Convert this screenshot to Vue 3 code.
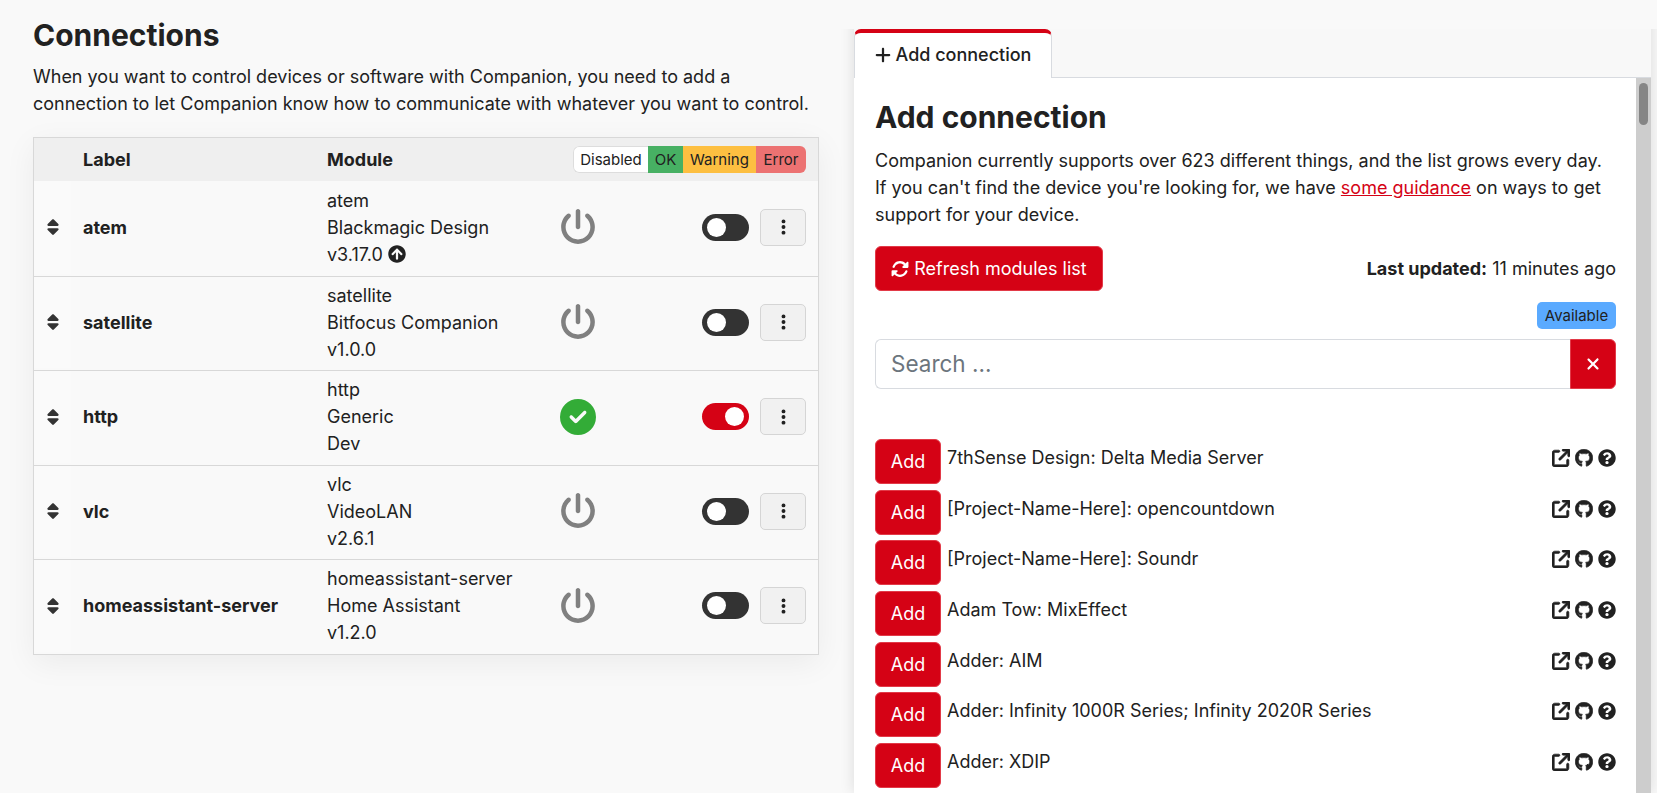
<script setup>
const connections = [
  { label: 'atem', id: 'atem', vendor: 'Blackmagic Design', version: 'v3.17.0', update: true, on: false },
  { label: 'satellite', id: 'satellite', vendor: 'Bitfocus Companion', version: 'v1.0.0', on: false },
  { label: 'http', id: 'http', vendor: 'Generic', version: 'Dev', on: true },
  { label: 'vlc', id: 'vlc', vendor: 'VideoLAN', version: 'v2.6.1', on: false },
  { label: 'homeassistant-server', id: 'homeassistant-server', vendor: 'Home Assistant', version: 'v1.2.0', on: false },
]

const modules = [
  '7thSense Design: Delta Media Server',
  '[Project-Name-Here]: opencountdown',
  '[Project-Name-Here]: Soundr',
  'Adam Tow: MixEffect',
  'Adder: AIM',
  'Adder: Infinity 1000R Series; Infinity 2020R Series',
  'Adder: XDIP',
]

const icons = {
  sort: 'M137.4 41.4c12.5-12.5 32.8-12.5 45.3 0l128 128c9.2 9.2 11.9 22.9 6.9 34.9s-16.6 19.8-29.6 19.8H32c-12.9 0-24.6-7.8-29.6-19.8s-2.2-25.7 6.9-34.9l128-128zm0 429.3l-128-128c-9.2-9.2-11.9-22.9-6.9-34.9s16.6-19.8 29.6-19.8H288c12.9 0 24.6 7.8 29.6 19.8s2.2 25.7-6.9 34.9l-128 128c-12.5 12.5-32.8 12.5-45.3 0z',
  power: 'M288 32c0-17.7-14.3-32-32-32s-32 14.3-32 32V256c0 17.7 14.3 32 32 32s32-14.3 32-32V32zM143.5 120.6c13.6-11.3 15.4-31.5 4.1-45.1s-31.5-15.4-45.1-4.1C49.7 115.4 16 181.8 16 256c0 132.5 107.5 240 240 240s240-107.5 240-240c0-74.2-33.8-140.6-86.6-184.6c-13.6-11.3-33.8-9.4-45.1 4.1s-9.4 33.8 4.1 45.1c38.9 32.3 63.5 81 63.5 135.4c0 97.2-78.8 176-176 176s-176-78.8-176-176c0-54.4 24.7-103.1 63.5-135.4z',
  check: 'M256 512A256 256 0 1 0 256 0a256 256 0 1 0 0 512zM369 209L241 337c-9.4 9.4-24.6 9.4-33.9 0l-64-64c-9.4-9.4-9.4-24.6 0-33.9s24.6-9.4 33.9 0l47 47L335 175c9.4-9.4 24.6-9.4 33.9 0s9.4 24.6 0 33.9z',
  dots: 'M64 360a56 56 0 1 0 0 112 56 56 0 1 0 0-112zm0-160a56 56 0 1 0 0 112 56 56 0 1 0 0-112zM120 96A56 56 0 1 0 8 96a56 56 0 1 0 112 0z',
  up: 'M8 256C8 119 119 8 256 8s248 111 248 248-111 248-248 248S8 393 8 256zm143.6 28.9l72.4-75.5V392c0 13.3 10.7 24 24 24h16c13.3 0 24-10.7 24-24V209.4l72.4 75.5c9.3 9.7 24.8 9.9 34.3.4l10.9-11c9.4-9.4 9.4-24.6 0-33.9L273 107.7c-9.4-9.4-24.6-9.4-33.9 0L106.3 240.4c-9.4 9.4-9.4 24.6 0 33.9l10.9 11c9.6 9.5 25.1 9.3 34.4-.4z',
  help: 'M504 256c0 136.997-111.043 248-248 248S8 392.997 8 256C8 119.083 119.043 8 256 8s248 111.083 248 248zM262.655 90c-54.497 0-89.255 22.957-116.549 63.758-3.536 5.286-2.353 12.415 2.715 16.258l34.699 26.31c5.205 3.947 12.621 3.008 16.665-2.122 17.864-22.658 30.113-35.797 57.303-35.797 20.429 0 45.698 13.148 45.698 32.958 0 14.976-12.363 22.667-32.534 33.976C247.128 238.528 216 254.941 216 296v4c0 6.627 5.373 12 12 12h56c6.627 0 12-5.373 12-12v-1.333c0-28.462 83.186-29.647 83.186-106.667 0-58.002-60.165-102-116.531-102zM256 338c-25.365 0-46 20.635-46 46 0 25.364 20.635 46 46 46s46-20.636 46-46c0-25.365-20.635-46-46-46z',
  ext: 'M320 0c-17.7 0-32 14.3-32 32s14.3 32 32 32h82.7L201.4 265.4c-12.5 12.5-12.5 32.8 0 45.3s32.8 12.5 45.3 0L448 109.3V192c0 17.7 14.3 32 32 32s32-14.3 32-32V32c0-17.7-14.3-32-32-32H320zM80 32C35.8 32 0 67.8 0 112V432c0 44.2 35.8 80 80 80H400c44.2 0 80-35.8 80-80V320c0-17.7-14.3-32-32-32s-32 14.3-32 32V432c0 8.8-7.2 16-16 16H80c-8.8 0-16-7.2-16-16V112c0-8.8 7.2-16 16-16H192c17.7 0 32-14.3 32-32s-14.3-32-32-32H80z',
  github: 'M165.9 397.4c0 2-2.3 3.6-5.2 3.6-3.3 0-5.6-1.6-5.6-3.6 0-2 2.3-3.6 5.2-3.6 3-.3 5.6 1.3 5.6 3.6zm-31.1-4.5c-.7 2 1.3 4.3 4.3 4.9 2.6 1 5.6 0 6.2-2s-1.3-4.3-4.3-5.2c-2.6-.7-5.5.3-6.2 2.3zm44.2-1.7c-2.9.7-4.9 2.6-4.6 4.9.3 2 2.9 3.3 5.9 2.6 2.9-.7 4.9-2.6 4.6-4.6-.3-1.9-3-3.2-5.9-2.9zM244.8 8C106.1 8 0 113.3 0 252c0 110.9 69.8 205.8 169.5 239.2 12.8 2.3 17.3-5.6 17.3-12.1 0-6.2-.3-40.4-.3-61.4 0 0-70 15-84.7-29.8 0 0-11.4-29.1-27.8-36.6 0 0-22.9-15.7 1.6-15.4 0 0 24.9 2 38.6 25.8 21.9 38.6 58.6 27.5 72.9 20.9 2.3-16 8.8-27.1 16-33.7-55.9-6.2-112.3-14.3-112.3-110.5 0-27.5 7.6-41.3 23.6-58.9-2.6-6.5-11.1-33.3 2.6-67.9 20.9-6.5 69 27 69 27 20-5.6 41.5-8.5 62.8-8.5s42.8 2.9 62.8 8.5c0 0 48.1-33.6 69-27 13.7 34.7 5.2 61.4 2.6 67.9 16 17.7 25.8 31.5 25.8 58.9 0 96.5-58.9 104.2-114.8 110.5 9.2 7.9 17 22.9 17 46.4 0 33.7-.3 75.4-.3 83.6 0 6.5 4.6 14.4 17.3 12.1C428.2 457.8 496 362.9 496 252 496 113.3 383.5 8 244.8 8zM97.2 352.9c-1.3 1-1 3.3.7 5.2 1.6 1.6 3.9 2.3 5.2 1 1.3-1 1-3.3-.7-5.2-1.6-1.6-3.9-2.3-5.2-1zm-10.8-8.1c-.7 1.3.3 2.9 2.3 3.9 1.6 1 3.6.7 4.3-.7.7-1.3-.3-2.9-2.3-3.9-2-.6-3.6-.3-4.3.7zm32.4 35.6c-1.6 1.3-1 4.3 1.3 6.2 2.3 2.3 5.2 2.6 6.5 1 1.3-1.3.7-4.3-1.3-6.2-2.2-2.3-5.2-2.6-6.5-1zm-11.4-14.7c-1.6 1-1.6 3.6 0 5.9 1.6 2.3 4.3 3.3 5.6 2.3 1.6-1.3 1.6-3.9 0-6.2-1.4-2.3-4-3.3-5.6-2z',
  sync: 'M142.9 142.9c62.2-62.2 162.7-62.5 225.3-1L327 183c-6.9 6.9-8.9 17.2-5.2 26.2s12.5 14.8 22.2 14.8H463.5c0 0 0 0 0 0H472c13.3 0 24-10.7 24-24V72c0-9.7-5.8-18.5-14.8-22.2s-19.3-1.7-26.2 5.2L413.4 96.6c-87.6-86.5-228.7-86.2-315.8 1C73.2 122 55.6 150.7 44.8 181.4c-5.9 16.7 2.9 34.9 19.5 40.8s34.9-2.9 40.8-19.5c7.7-21.8 20.2-42.3 37.8-59.8zM16 312v7.6 .7V440c0 9.7 5.8 18.5 14.8 22.2s19.3 1.7 26.2-5.2l41.6-41.6c87.6 86.5 228.7 86.2 315.8-1c24.4-24.4 42.1-53.1 52.9-83.7c5.9-16.7-2.9-34.9-19.5-40.8s-34.9 2.9-40.8 19.5c-7.7 21.8-20.2 42.3-37.8 59.8c-62.2 62.2-162.7 62.5-225.3 1L185 329c6.9-6.9 8.9-17.2 5.2-26.2s-12.5-14.8-22.2-14.8H48.4h-.7H40c-13.3 0-24 10.7-24 24z',
  plus: 'M256 80c0-17.7-14.3-32-32-32s-32 14.3-32 32V224H48c-17.7 0-32 14.3-32 32s14.3 32 32 32H192V432c0 17.7 14.3 32 32 32s32-14.3 32-32V288H400c17.7 0 32-14.3 32-32s-14.3-32-32-32H256V80z',
  xmark: 'M342.6 150.6c12.5-12.5 12.5-32.8 0-45.3s-32.8-12.5-45.3 0L192 210.7 86.6 105.4c-12.5-12.5-32.8-12.5-45.3 0s-12.5 32.8 0 45.3L146.7 256 41.4 361.4c-12.5 12.5-12.5 32.8 0 45.3s32.8 12.5 45.3 0L192 301.3 297.4 406.6c12.5 12.5 32.8 12.5 45.3 0s12.5-32.8 0-45.3L237.3 256 342.6 150.6z',
}
</script>

<template>
  <div class="page">
    <section class="left">
      <h1>Connections</h1>
      <p class="intro">
        When you want to control devices or software with Companion, you need to add a
        connection to let Companion know how to communicate with whatever you want to control.
      </p>

      <div class="table">
        <div class="row head">
          <div class="cell-grip"></div>
          <div class="cell-label">Label</div>
          <div class="cell-module">Module</div>
          <div class="legend">
            <span class="l-disabled">Disabled</span>
            <span class="l-ok">OK</span>
            <span class="l-warning">Warning</span>
            <span class="l-error">Error</span>
          </div>
        </div>

        <div v-for="c in connections" :key="c.id" class="row item">
          <div class="cell-grip">
            <svg class="sort" viewBox="0 0 320 512"><path :d="icons.sort" /></svg>
          </div>
          <div class="cell-label name">{{ c.label }}</div>
          <div class="cell-module">
            <div>{{ c.id }}</div>
            <div>{{ c.vendor }}</div>
            <div class="version">
              {{ c.version }}
              <svg v-if="c.update" class="update" viewBox="0 0 512 512"><path :d="icons.up" /></svg>
            </div>
          </div>
          <div class="cell-status">
            <svg v-if="c.on" class="status ok" viewBox="0 0 512 512"><path :d="icons.check" /></svg>
            <svg v-else class="status off" viewBox="0 0 512 512"><path :d="icons.power" /></svg>
          </div>
          <div class="cell-actions">
            <span class="toggle" :class="{ on: c.on }"><span class="knob"></span></span>
            <button class="more">
              <svg viewBox="0 0 128 512"><path :d="icons.dots" /></svg>
            </button>
          </div>
        </div>
      </div>
    </section>

    <section class="right">
      <div class="tabs">
        <div class="tab">
          <svg class="plus" viewBox="0 0 448 512"><path :d="icons.plus" /></svg>
          Add connection
        </div>
      </div>

      <div class="panel">
        <div class="panel-body">
          <h2>Add connection</h2>
          <p class="blurb">
            Companion currently supports over 623 different things, and the list grows every day.
            If you can't find the device you're looking for, we have
            <a href="#">some guidance</a> on ways to get support for your device.
          </p>

          <div class="refresh-row">
            <button class="btn-red refresh">
              <svg viewBox="0 0 512 512"><path :d="icons.sync" /></svg>
              Refresh modules list
            </button>
            <span class="updated"><b>Last updated:</b> 11 minutes ago</span>
          </div>

          <div class="filter-row"><span class="available">Available</span></div>

          <div class="search">
            <input type="text" placeholder="Search ..." />
            <button class="clear">
              <svg viewBox="0 0 384 512"><path :d="icons.xmark" /></svg>
            </button>
          </div>

          <div class="modules">
            <div v-for="m in modules" :key="m" class="module">
              <button class="btn-red add">Add</button>
              <span class="module-name">{{ m }}</span>
              <span class="links">
                <svg class="heavy" viewBox="0 0 512 512"><path :d="icons.ext" /></svg>
                <svg class="heavy" viewBox="0 0 496 512"><path :d="icons.github" /></svg>
                <svg viewBox="0 0 512 512"><path :d="icons.help" /></svg>
              </span>
            </div>
          </div>
        </div>

        <div class="scrollbar"><div class="thumb"></div></div>
      </div>
    </section>
  </div>
</template>

<style>
html, body {
  margin: 0;
  height: 100%;
  overflow: hidden;
  background: #f9f9f9;
}
</style>

<style scoped>
.page {
  display: flex;
  height: 793px;
  overflow: hidden;
  font-family: Inter, "Liberation Sans", sans-serif;
  font-size: 18px;
  line-height: 27px;
  color: #212121;
  background: #f9f9f9;
}

/* left column */
.left {
  width: 854px;
  box-sizing: border-box;
  flex: none;
  padding: 15px 35px 0 33px;
}

h1 {
  margin: 0 0 8px;
  font-size: 30px;
  line-height: 40px;
  font-weight: 700;
}

.intro {
  margin: 0 0 20px;
}

.table {
  border: 1px solid #d8d8d8;
  box-shadow: 0 8px 30px rgba(0, 0, 0, 0.06);
  background: #f9f9f9;
}

.row {
  display: flex;
  align-items: center;
}

.head {
  height: 43px;
  background: #efefef;
  font-weight: 700;
}

.item {
  height: 94.5px;
  box-sizing: border-box;
  border-top: 1px solid #d8d8d8;
  padding-bottom: 2px;
}

.head + .item {
  border-top: none;
}

.cell-grip {
  width: 37px;
  flex: none;
  align-self: stretch;
  display: flex;
  align-items: center;
  justify-content: center;
}

.item .cell-grip {
  background: #fafafa;
}

.sort {
  width: 12px;
  height: 18px;
  fill: #333;
}

.cell-label {
  width: 244px;
  flex: none;
  padding-left: 12px;
}

.name {
  font-weight: 700;
}

.cell-module {
  width: 233px;
  flex: none;
}

.version {
  display: flex;
  align-items: center;
  gap: 5px;
}

.update {
  width: 18px;
  height: 18px;
  fill: #212121;
}

.cell-status {
  width: 36px;
  flex: none;
  display: flex;
}

.status {
  width: 36px;
  height: 36px;
}

.status.off {
  fill: #808080;
}

.status.ok {
  fill: #33ac37;
}

.cell-actions {
  flex: 1;
  display: flex;
  justify-content: flex-end;
  align-items: center;
  gap: 11px;
  padding-right: 12px;
}

.toggle {
  width: 47px;
  height: 27px;
  box-sizing: border-box;
  border-radius: 14px;
  background: #333;
  padding: 4px 5px;
  display: flex;
}

.toggle.on {
  background: #d50215;
  justify-content: flex-end;
}

.knob {
  width: 19px;
  height: 19px;
  border-radius: 50%;
  background: #fff;
}

.more {
  width: 46px;
  height: 37px;
  padding: 0;
  display: flex;
  align-items: center;
  justify-content: center;
  background: #f1f1f1;
  border: 1px solid #d5d5d5;
  border-radius: 5px;
}

.more svg {
  width: 5px;
  height: 18px;
  fill: #212121;
}

.legend {
  margin-left: auto;
  margin-right: 12px;
  display: flex;
  height: 27px;
  font-size: 15px;
  font-weight: 400;
  line-height: 27px;
  border-radius: 6px;
  overflow: hidden;
}

.legend span {
  text-align: center;
  box-sizing: border-box;
}

.l-disabled {
  width: 75px;
  background: #fff;
  border: 1px solid #ddd;
  border-right: none;
  border-radius: 6px 0 0 6px;
  line-height: 25px;
}

.l-ok {
  width: 35px;
  background: #47b063;
}

.l-warning {
  width: 73px;
  background: #fdbf41;
}

.l-error {
  width: 50px;
  background: #ec7272;
}

/* right column */
.right {
  width: 797px;
  flex: none;
  padding-top: 29px;
  display: flex;
  flex-direction: column;
  box-shadow: 0 0 14px rgba(0, 0, 0, 0.12);
  clip-path: inset(29px -20px -20px -20px);
}

.tabs {
  display: flex;
  height: 49px;
  flex: none;
  background: #f8f8f8;
  border-bottom: 1px solid #d8dbe0;
  box-sizing: border-box;
}

.tab {
  width: 198px;
  height: 49px;
  box-sizing: border-box;
  display: flex;
  align-items: center;
  justify-content: center;
  gap: 5px;
  padding-bottom: 2px;
  font-weight: 500;
  background: #fff;
  border-top: 4px solid #d50215;
  border-left: 1px solid #d8dbe0;
  border-right: 1px solid #d8dbe0;
  border-radius: 7px 7px 0 0;
}

.plus {
  width: 16px;
  height: 18px;
  fill: #212121;
}

.panel {
  flex: 1;
  min-height: 0;
  display: flex;
  background: #fff;
}

.panel-body {
  flex: 1;
  min-width: 0;
  padding: 17px 20px 0 21px;
  overflow: hidden;
}

h2 {
  margin: 0 0 8px;
  font-size: 30px;
  line-height: 44px;
  font-weight: 700;
}

.blurb {
  margin: 0 0 18px;
}

.blurb a {
  color: #d50215;
  text-decoration: underline;
}

.btn-red {
  background: #d50215;
  color: #fff;
  border: 1px solid #e23a48;
  border-radius: 6px;
  font: inherit;
  padding: 0;
}

.refresh-row {
  display: flex;
  align-items: center;
  justify-content: space-between;
}

.refresh {
  width: 228px;
  height: 45px;
  display: flex;
  align-items: center;
  justify-content: center;
  gap: 5px;
}

.refresh svg {
  width: 18px;
  height: 18px;
  fill: #fff;
}

.updated b {
  font-weight: 700;
}

.filter-row {
  display: flex;
  justify-content: flex-end;
  margin-top: 11px;
}

.available {
  width: 79px;
  height: 27px;
  text-align: center;
  background: #5aaaff;
  border-radius: 5px;
  font-size: 15px;
  line-height: 27px;
}

.search {
  display: flex;
  height: 50px;
  margin-top: 10px;
}

.search input {
  flex: 1;
  min-width: 0;
  border: 1px solid #d8dbe0;
  border-right: none;
  border-radius: 6px 0 0 6px;
  padding: 0 15px 2px;
  font: inherit;
  font-size: 22.5px;
  outline: none;
}

.search input::placeholder {
  color: #6c757d;
}

.clear {
  width: 46px;
  display: flex;
  align-items: center;
  justify-content: center;
  padding: 0;
  background: #d50215;
  border: 1px solid #e23a48;
  border-radius: 0 6px 6px 0;
}

.clear svg {
  width: 14px;
  height: 18px;
  fill: #fff;
}

.modules {
  margin-top: 50px;
  display: flex;
  flex-direction: column;
  gap: 5.7px;
}

.module {
  display: flex;
  align-items: flex-start;
  height: 45px;
  gap: 6px;
}

.add {
  width: 66px;
  height: 45px;
  flex: none;
}

.module-name {
  flex: 1;
  margin-top: 5px;
}

.links {
  display: flex;
  gap: 5px;
  margin-top: 10px;
}

.links svg {
  width: 18px;
  height: 18px;
  fill: #212121;
}

.links .heavy {
  stroke: #212121;
  stroke-width: 18px;
}

.scrollbar {
  width: 15px;
  flex: none;
  background: #cdcdcd;
  padding: 5px 3px 0;
  box-sizing: border-box;
}

.thumb {
  height: 42px;
  border-radius: 5px;
  background: #858585;
}
</style>
